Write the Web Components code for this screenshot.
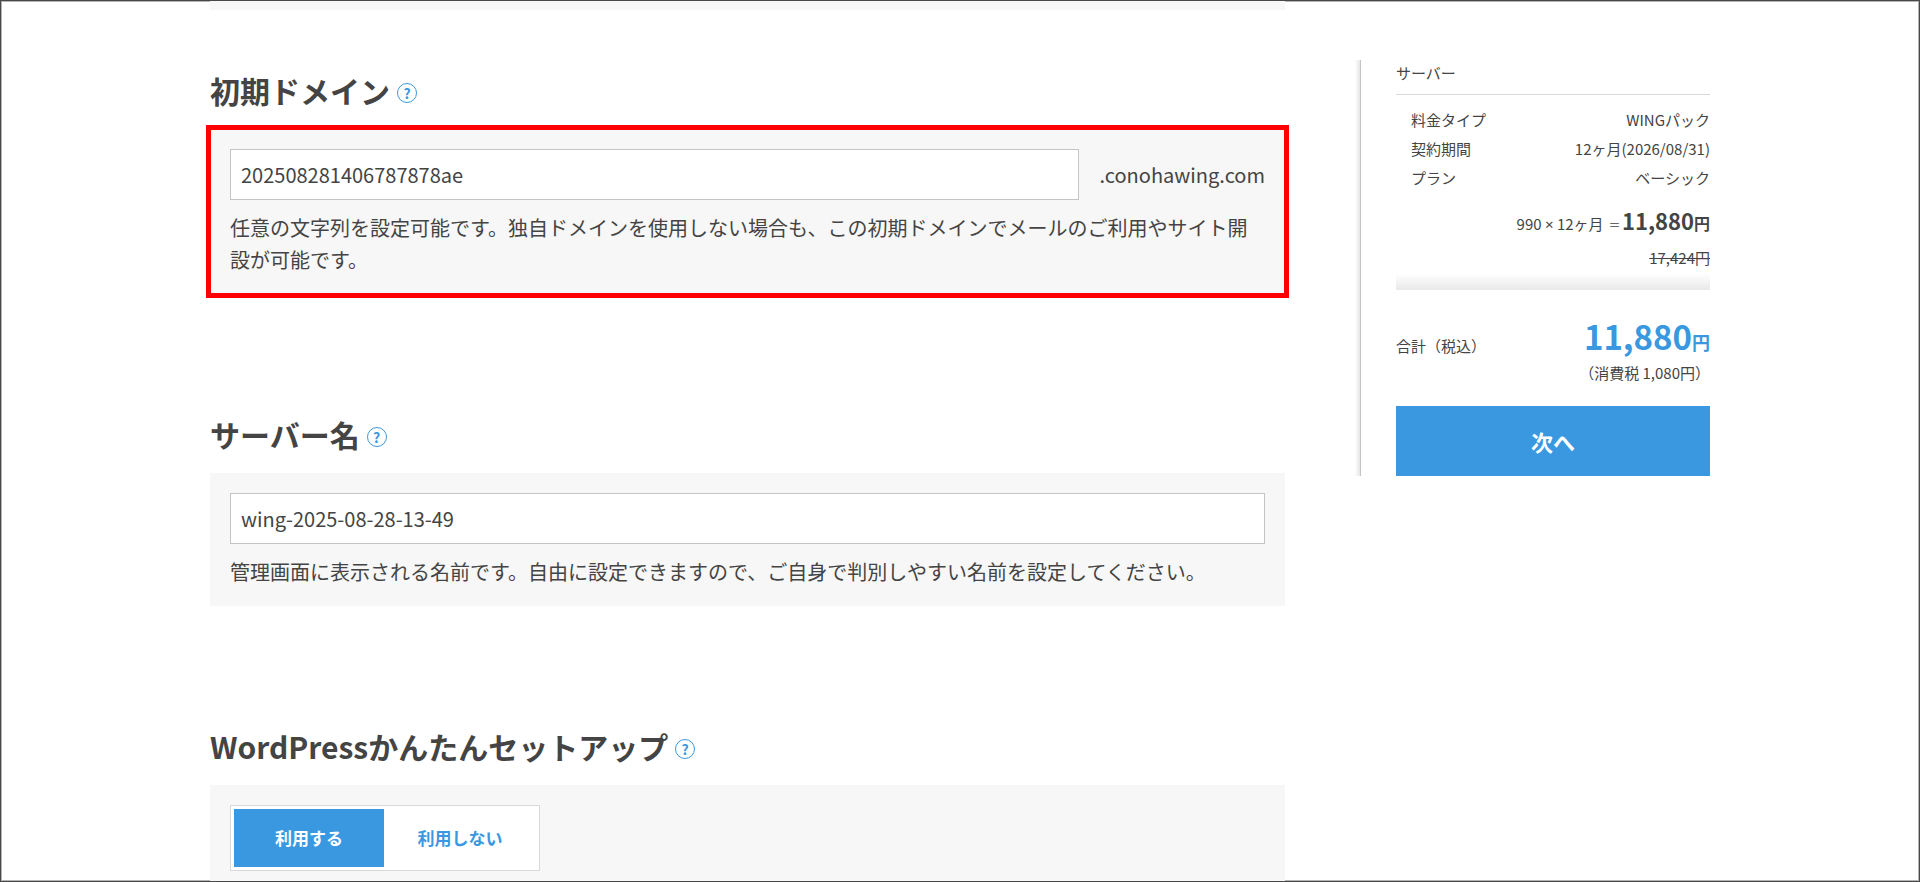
<!DOCTYPE html>
<html lang="ja">
<head>
<meta charset="utf-8">
<title>ConoHa WING</title>
<style>
    :root{
        --blue: #3998e0;
        --text: #444;
        --panel: #f7f7f7;
        --line: #c4c4c4;
    }
    body{
        margin: 0;
        color: var(--text);
        background: #fff;
        font-family: 'Noto Sans CJK JP', 'Noto Sans', sans-serif;
        font-size: 20px;
        line-height: 32px;
    }
</style>
</head>
<body>
<order-page></order-page>
<script>
const base = `
    *{
        box-sizing: border-box;
    }
    button, input{
        font: inherit;
        color: inherit;
        margin: 0;
        border-radius: 0;
    }
`

class HelpButton extends HTMLElement{
    constructor(){
        super()
        this._shadowRoot = this.attachShadow({mode: 'open'})
    }
    connectedCallback(){
        this._shadowRoot.innerHTML = `
        <style>
            ${base}
            :host{
                display: inline-flex;
            }
            button{
                width: 20px;
                height: 20px;
                padding: 0;
                border: 1px solid var(--blue);
                border-radius: 50%;
                background: none;
                color: var(--blue);
                font-size: 14px;
                font-weight: 700;
                line-height: 18px;
                text-align: center;
                cursor: pointer;
            }
        </style>
        <button type="button">?</button>
        `
    }
}
window.customElements.define('help-button', HelpButton)

class FormSection extends HTMLElement{
    constructor(){
        super()
        this._shadowRoot = this.attachShadow({mode: 'open'})
    }
    connectedCallback(){
        this._shadowRoot.innerHTML = `
        <style>
            ${base}
            :host{
                display: block;
            }
            header{
                display: flex;
                align-items: center;
                gap: 7px;
                height: 44px;
                margin-bottom: 14px;
            }
            h2{
                align-self: flex-start;
                margin: 0;
                font-size: 30px;
                font-weight: 700;
                line-height: 38px;
            }
            .panel{
                padding: 20px 20px 18px;
                background: var(--panel);
            }
            :host([highlight]) .panel{
                outline: 5px solid #f00;
                outline-offset: -1px;
            }
        </style>
        <header>
            <h2>${this.getAttribute('heading')}</h2>
            <help-button></help-button>
        </header>
        <div class="panel"><slot></slot></div>
        `
    }
}
window.customElements.define('form-section', FormSection)

class TextField extends HTMLElement{
    constructor(){
        super()
        this._shadowRoot = this.attachShadow({mode: 'open'})
    }
    connectedCallback(){
        this._shadowRoot.innerHTML = `
        <style>
            ${base}
            :host{
                display: block;
            }
            .row{
                display: flex;
                align-items: center;
                gap: 20px;
            }
            input{
                flex: 1;
                min-width: 0;
                height: 51px;
                padding: 0 10px;
                border: 1px solid var(--line);
                background: #fff;
                outline: none;
            }
            p{
                margin: 12px 0 0;
            }
        </style>
        <div class="row">
            <input type="text" aria-label="${this.getAttribute('label')}" aria-describedby="note" value="${this.getAttribute('value')}">
            <slot name="suffix"></slot>
        </div>
        <p id="note"><slot></slot></p>
        `
    }
}
window.customElements.define('text-field', TextField)

class ToggleSwitch extends HTMLElement{
    constructor(){
        super()
        this._shadowRoot = this.attachShadow({mode: 'open'})
    }
    connectedCallback(){
        const options = this.getAttribute('options').split(',')
        this._shadowRoot.innerHTML = `
        <style>
            ${base}
            :host{
                display: flex;
            }
            div{
                display: grid;
                grid-template-columns: 150px 152px;
                padding: 3px;
                border: 1px solid #d9d9d9;
                background: #fff;
            }
            button{
                height: 58px;
                padding: 0;
                border: 0;
                background: none;
                color: var(--blue);
                font-size: 17px;
                font-weight: 700;
                cursor: pointer;
            }
            button[aria-pressed="true"]{
                background: var(--blue);
                color: #fff;
            }
        </style>
        <div>
            ${options.map((name, i) => `<button type="button" aria-pressed="${i === 0}">${name}</button>`).join('')}
        </div>
        `
        const buttons = this._shadowRoot.querySelectorAll('button')
        buttons.forEach((button) => {
            button.addEventListener('click', () => {
                buttons.forEach((b) => b.setAttribute('aria-pressed', b === button))
            })
        })
    }
}
window.customElements.define('toggle-switch', ToggleSwitch)

class OrderSummary extends HTMLElement{
    constructor(){
        super()
        this._shadowRoot = this.attachShadow({mode: 'open'})
    }
    connectedCallback(){
        this._shadowRoot.innerHTML = `
        <style>
            ${base}
            :host{
                display: grid;
                grid-template-columns: 5px 1fr;
                font-size: 15px;
                line-height: 29px;
            }
            .edge{
                background: linear-gradient(to left, #e6e6e6, #fff);
            }
            .body{
                padding-left: 35px;
                border-left: 1px solid var(--line);
            }
            h3{
                margin: 0 0 10px;
                padding-bottom: 8px;
                border-bottom: 1px solid #d9d9d9;
                font-size: 15px;
                font-weight: 400;
                line-height: 26px;
            }
            dl{
                margin: 0;
                padding-left: 15px;
            }
            dl div{
                display: flex;
                justify-content: space-between;
            }
            dd{
                margin: 0;
            }
            .price{
                margin: 14px 0 0;
                text-align: right;
                line-height: 36px;
            }
            .price strong{
                font-size: 22px;
                line-height: 22px;
            }
            .price b{
                font-size: 16px;
                line-height: 16px;
            }
            .times{
                font-family: 'Noto Sans', sans-serif;
                line-height: 16px;
            }
            .equals{
                display: inline-block;
                width: 15px;
                font-size: 12px;
                line-height: 16px;
                text-align: center;
            }
            .list-price{
                margin: 0;
                text-align: right;
                line-height: 32px;
            }
            .shade{
                height: 16px;
                background: linear-gradient(#fff, #e8e8e8);
            }
            .total{
                display: flex;
                justify-content: space-between;
                align-items: flex-end;
                height: 48px;
                margin-top: 22px;
            }
            .total strong{
                color: var(--blue);
                font-size: 33px;
                line-height: 48px;
            }
            .total small{
                font-size: 18px;
                line-height: 18px;
            }
            .tax{
                margin: 0 0 20px;
                text-align: right;
                line-height: 26px;
            }
            .next{
                display: block;
                width: 100%;
                height: 70px;
                border: 0;
                background: var(--blue);
                color: #fff;
                font-size: 22px;
                font-weight: 700;
                cursor: pointer;
            }
        </style>
        <div class="edge"></div>
        <div class="body">
            <h3>サーバー</h3>
            <dl>
                <div><dt>料金タイプ</dt><dd>WINGパック</dd></div>
                <div><dt>契約期間</dt><dd>12ヶ月(2026/08/31)</dd></div>
                <div><dt>プラン</dt><dd>ベーシック</dd></div>
            </dl>
            <p class="price">990 <span class="times">×</span> 12ヶ月 <span class="equals">＝</span><strong>11,880</strong><b>円</b></p>
            <p class="list-price"><s>17,424円</s></p>
            <div class="shade"></div>
            <div class="total">
                <span>合計（税込）</span>
                <strong>11,880<small>円</small></strong>
            </div>
            <p class="tax">（消費税 1,080円）</p>
            <button class="next" type="button">次へ</button>
        </div>
        `
    }
}
window.customElements.define('order-summary', OrderSummary)

class OrderPage extends HTMLElement{
    constructor(){
        super()
        this._shadowRoot = this.attachShadow({mode: 'open'})
    }
    connectedCallback(){
        this._shadowRoot.innerHTML = `
        <style>
            ${base}
            :host{
                display: block;
                box-sizing: border-box;
                height: 100vh;
                overflow: hidden;
                border: 1px solid #484848;
                box-shadow: inset 0 0 0 1px #b4b4b4;
            }
            main{
                display: grid;
                grid-template-columns: minmax(0, 1fr) 355px;
                column-gap: 70px;
                align-items: start;
                max-width: 1500px;
                margin: 0 auto;
            }
            .previous{
                height: 9px;
                background: var(--panel);
            }
            form-section{
                margin-top: 121px;
            }
            .previous + form-section{
                margin-top: 61px;
            }
            order-summary{
                margin-top: 59px;
            }
        </style>
        <main>
            <div>
                <div class="previous"></div>
                <form-section heading="初期ドメイン" highlight>
                    <text-field label="初期ドメイン" value="202508281406787878ae">
                        <span slot="suffix">.conohawing.com</span>
                        任意の文字列を設定可能です。独自ドメインを使用しない場合も、この初期ドメインでメールのご利用やサイト開設が可能です。
                    </text-field>
                </form-section>
                <form-section heading="サーバー名">
                    <text-field label="サーバー名" value="wing-2025-08-28-13-49">
                        管理画面に表示される名前です。自由に設定できますので、ご自身で判別しやすい名前を設定してください。
                    </text-field>
                </form-section>
                <form-section heading="WordPressかんたんセットアップ">
                    <toggle-switch options="利用する,利用しない"></toggle-switch>
                </form-section>
            </div>
            <order-summary></order-summary>
        </main>
        `
    }
}
window.customElements.define('order-page', OrderPage)
</script>
</body>
</html>
